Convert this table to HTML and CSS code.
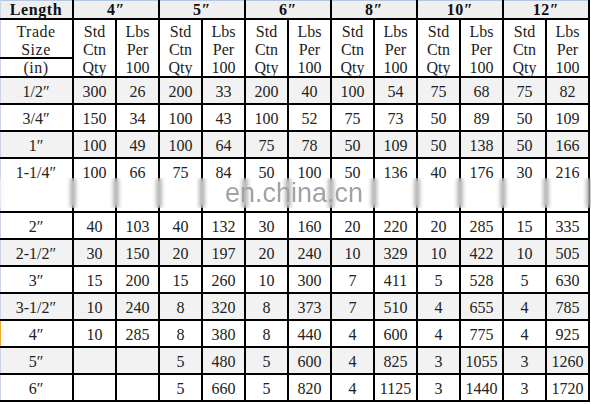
FILE: index.html
```html
<!DOCTYPE html>
<html>
<head>
<meta charset="utf-8">
<link rel="stylesheet" href="styles.css">
</head>
<body>
<div class="sheet">
  <div class="grid">
    <div class="row head">
      <div class="c1 bold">Length</div>
      <div class="sp bold">4″</div>
      <div class="sp bold">5″</div>
      <div class="sp bold">6″</div>
      <div class="sp bold">8″</div>
      <div class="sp bold">10″</div>
      <div class="sp bold">12″</div>
    </div>
    <div class="row sub">
      <div class="c1 trade">Trade<br>Size</div>
      <div class="lbl">Std<br>Ctn<br>Qty</div>
      <div class="lbl">Lbs<br>Per<br>100</div>
      <div class="lbl">Std<br>Ctn<br>Qty</div>
      <div class="lbl">Lbs<br>Per<br>100</div>
      <div class="lbl">Std<br>Ctn<br>Qty</div>
      <div class="lbl">Lbs<br>Per<br>100</div>
      <div class="lbl">Std<br>Ctn<br>Qty</div>
      <div class="lbl">Lbs<br>Per<br>100</div>
      <div class="lbl">Std<br>Ctn<br>Qty</div>
      <div class="lbl">Lbs<br>Per<br>100</div>
      <div class="lbl">Std<br>Ctn<br>Qty</div>
      <div class="lbl">Lbs<br>Per<br>100</div>
      <div class="c1 unit">(in)</div>
    </div>
    <div class="row data g">
      <div class="c1">1/2″</div><div>300</div><div>26</div><div>200</div><div>33</div><div>200</div><div>40</div><div>100</div><div>54</div><div>75</div><div>68</div><div>75</div><div>82</div>
    </div>
    <div class="row data">
      <div class="c1">3/4″</div><div>150</div><div>34</div><div>100</div><div>43</div><div>100</div><div>52</div><div>75</div><div>73</div><div>50</div><div>89</div><div>50</div><div>109</div>
    </div>
    <div class="row data g">
      <div class="c1">1″</div><div>100</div><div>49</div><div>100</div><div>64</div><div>75</div><div>78</div><div>50</div><div>109</div><div>50</div><div>138</div><div>50</div><div>166</div>
    </div>
    <div class="row data tall">
      <div class="c1">1-1/4″</div><div>100</div><div>66</div><div>75</div><div>84</div><div>50</div><div>100</div><div>50</div><div>136</div><div>40</div><div>176</div><div>30</div><div>216</div>
    </div>
    <div class="row data">
      <div class="c1">2″</div><div>40</div><div>103</div><div>40</div><div>132</div><div>30</div><div>160</div><div>20</div><div>220</div><div>20</div><div>285</div><div>15</div><div>335</div>
    </div>
    <div class="row data g">
      <div class="c1">2-1/2″</div><div>30</div><div>150</div><div>20</div><div>197</div><div>20</div><div>240</div><div>10</div><div>329</div><div>10</div><div>422</div><div>10</div><div>505</div>
    </div>
    <div class="row data">
      <div class="c1">3″</div><div>15</div><div>200</div><div>15</div><div>260</div><div>10</div><div>300</div><div>7</div><div>411</div><div>5</div><div>528</div><div>5</div><div>630</div>
    </div>
    <div class="row data g">
      <div class="c1">3-1/2″</div><div>10</div><div>240</div><div>8</div><div>320</div><div>8</div><div>373</div><div>7</div><div>510</div><div>4</div><div>655</div><div>4</div><div>785</div>
    </div>
    <div class="row data mark">
      <div class="c1">4″</div><div>10</div><div>285</div><div>8</div><div>380</div><div>8</div><div>440</div><div>4</div><div>600</div><div>4</div><div>775</div><div>4</div><div>925</div>
    </div>
    <div class="row data g">
      <div class="c1">5″</div><div></div><div></div><div>5</div><div>480</div><div>5</div><div>600</div><div>4</div><div>825</div><div>3</div><div>1055</div><div>3</div><div>1260</div>
    </div>
    <div class="row data">
      <div class="c1">6″</div><div></div><div></div><div>5</div><div>660</div><div>5</div><div>820</div><div>4</div><div>1125</div><div>3</div><div>1440</div><div>3</div><div>1720</div>
    </div>
  </div>
  <div class="band"><span class="wm">en.china.cn</span></div>
</div>
</body>
</html>
```

FILE: styles.css
```css
html, body {
  margin: 0;
  padding: 0;
  background: #ffffff;
}

body {
  font-family: "Liberation Serif", "DejaVu Serif", serif;
  font-size: 16px;
  color: #222222;
}

.sheet {
  position: relative;
  width: 591px;
  height: 404px;
  overflow: hidden;
}

.grid {
  display: grid;
  grid-template-columns: 72px repeat(12, 41px);
  grid-template-rows: 18px 37px 17px repeat(12, 25px);
  gap: 2px;
  padding: 0 2px 2px 0;
  width: max-content;
  background: #000000;
}

.row {
  display: contents;
}

.grid .row > div {
  background: #ffffff;
  text-align: center;
  white-space: nowrap;
}

.row.head > div {
  background: #efefef;
  box-shadow: inset 0 1px 0 #b3c7e2;
  line-height: 16px;
  padding-top: 2px;
  color: #111111;
}

.row.head > .sp {
  grid-column: span 2;
}

.bold {
  font-weight: bold;
  letter-spacing: 0.6px;
}

.row.sub > .lbl {
  grid-row: span 2;
  line-height: 18px;
  padding-top: 3px;
}

.row.sub > .trade {
  line-height: 18px;
  padding-top: 3px;
  letter-spacing: 0.5px;
}

.row.sub > .unit {
  line-height: 17px;
  letter-spacing: 0.5px;
}

.row.data > div {
  line-height: 25px;
  padding-top: 1px;
}

.row.data.g > div {
  background: #f2f2f2;
}

.row.data.tall > div {
  grid-row: span 2;
}

.grid .row > .c1 {
  box-shadow: inset 1px 0 0 #cbd5e3;
}

.grid .row.head > .c1 {
  box-shadow: inset 1px 0 0 #cbd5e3, inset 0 1px 0 #b3c7e2;
}

.grid .row.mark > .c1 {
  box-shadow: inset 1px 0 0 #f0a830;
}

.band {
  position: absolute;
  left: 0;
  top: 178px;
  width: 591px;
  height: 30px;
  background: rgba(255, 255, 255, 0.15);
  -webkit-backdrop-filter: blur(2.5px);
  backdrop-filter: blur(2.5px);
}

.wm {
  position: absolute;
  left: 225px;
  top: 0px;
  font-family: "Liberation Sans", Arial, sans-serif;
  font-size: 27px;
  line-height: 30px;
  color: #a3a3a3;
  filter: blur(0.3px);
}
```
